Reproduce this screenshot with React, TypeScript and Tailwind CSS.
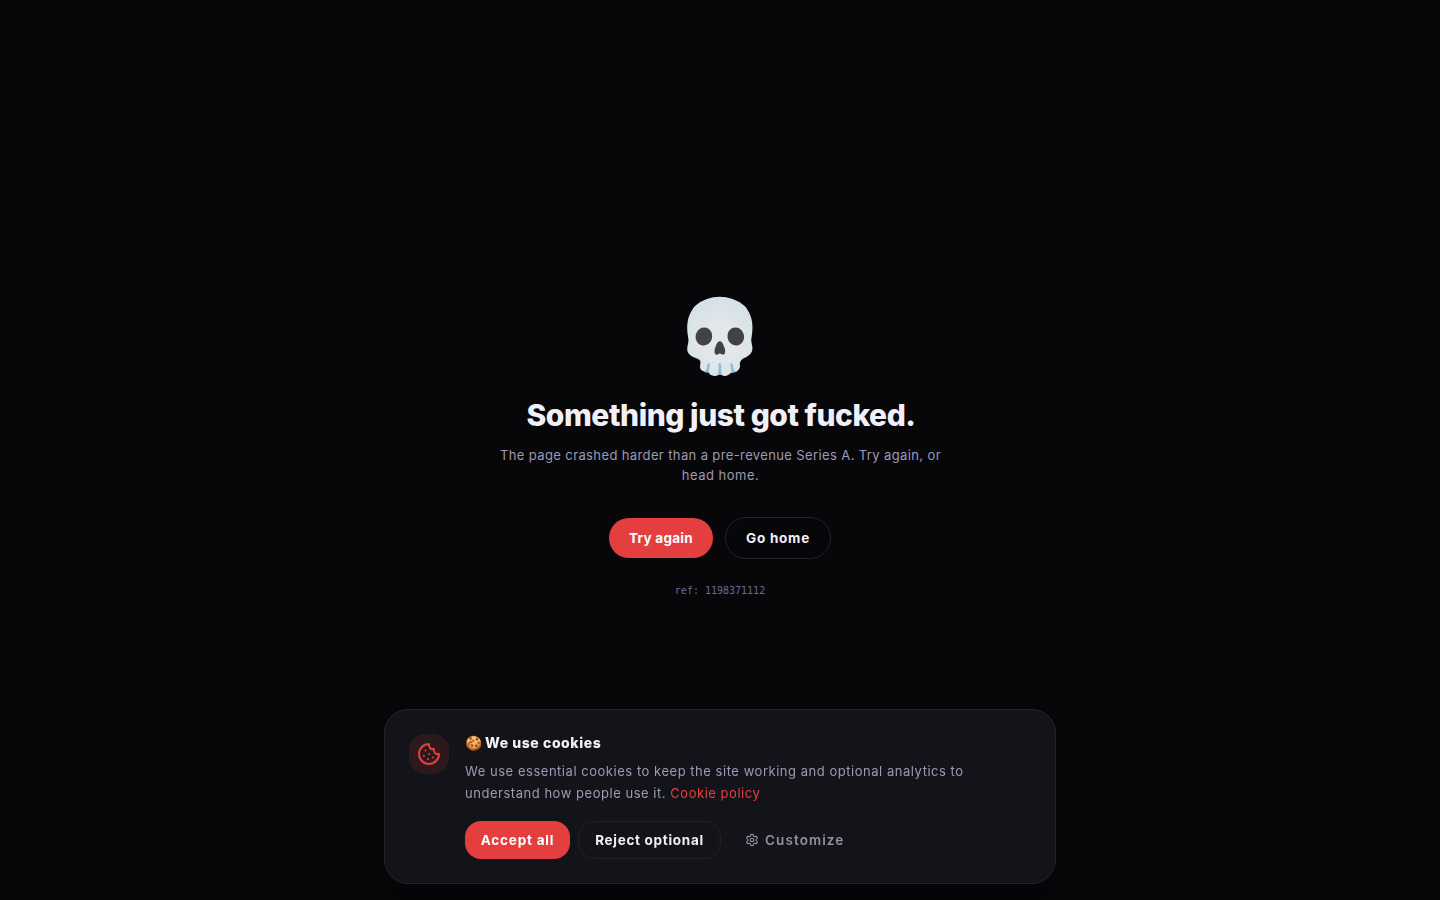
import React from 'react';
import { Cookie, Settings } from 'lucide-react';

const CookieBanner: React.FC = () => {
  return (
    <div className="fixed inset-x-0 bottom-4 z-50 flex justify-center px-4">
      <div className="flex h-[175px] w-[672px] gap-4 rounded-3xl border border-[#23242b] bg-[#131419] p-6 shadow-2xl shadow-black/60">
        <div className="flex size-10 shrink-0 items-center justify-center rounded-2xl bg-[#e53e3e]/12 text-[#e53e3e]">
          <Cookie size={24} strokeWidth={2} />
        </div>
        <div className="min-w-0 flex-1">
          <h2 className="flex h-[18px] items-center gap-[3px] text-sm font-bold leading-[18px] text-[#f1f0f7]">
            <span>🍪</span>
            <span className="whitespace-nowrap font-extrabold tracking-[0.57px]">We use cookies</span>
          </h2>
          <p className="mt-2 whitespace-nowrap text-[13px] leading-[22px] tracking-[0.53px] text-[#9c9ab4]">
            <span>We use essential cookies to keep the site working and optional analytics to</span>
            <br />
            <span>understand how people use it.</span>{' '}
            <a href="#" className="text-[#e53e3e]">Cookie policy</a>
          </p>
          <div className="mt-[17px] flex gap-2 whitespace-nowrap text-[13.5px] font-bold">
            <button className="h-[38px] w-[105px] rounded-2xl bg-[#e53e3e] tracking-[0.8px] text-white">Accept all</button>
            <button className="h-[38px] w-[143px] rounded-2xl border border-[#202127] tracking-[0.7px] text-[#f1f0f7]">Reject optional</button>
            <button className="flex h-[38px] items-center gap-1.5 px-4 font-semibold tracking-[1.1px] text-[#9290a8]">
              <Settings size={14} />
              Customize
            </button>
          </div>
        </div>
      </div>
    </div>
  );
};

const App: React.FC = () => {
  return (
    <main className="flex h-screen w-full flex-col items-center overflow-hidden bg-[#07070a] pt-[287px] font-['Inter',sans-serif] text-[#f1f0f7]">
      <div className="flex h-24 items-center text-[72px] leading-none">💀</div>
      <h1 className="mt-3.5 whitespace-nowrap pl-0.5 text-[30px] font-extrabold leading-9 tracking-[-0.45px]">Something just got fucked.</h1>
      <p className="mt-3 whitespace-nowrap pl-px text-center text-[13px] leading-5 tracking-[0.38px] text-[#9c9ab4]">
        <span>The page crashed harder than a pre-revenue Series A. Try again, or</span>
        <br />
        <span className="tracking-[0.5px]">head home.</span>
      </p>
      <div className="mt-8 flex items-center gap-3 text-[13.5px] font-bold">
        <button className="h-10 w-[104px] rounded-full bg-[#e53e3e] tracking-[0.25px] text-white">Try again</button>
        <button className="h-[42px] w-[106px] rounded-full border border-[#23222e] tracking-[0.75px]">Go home</button>
      </div>
      <p className="mt-6 font-['DejaVu_Sans_Mono',monospace] text-[10px] leading-[15px] text-[#6b6996]">ref: 1198371112</p>
      <CookieBanner />
    </main>
  );
};

export default App;
